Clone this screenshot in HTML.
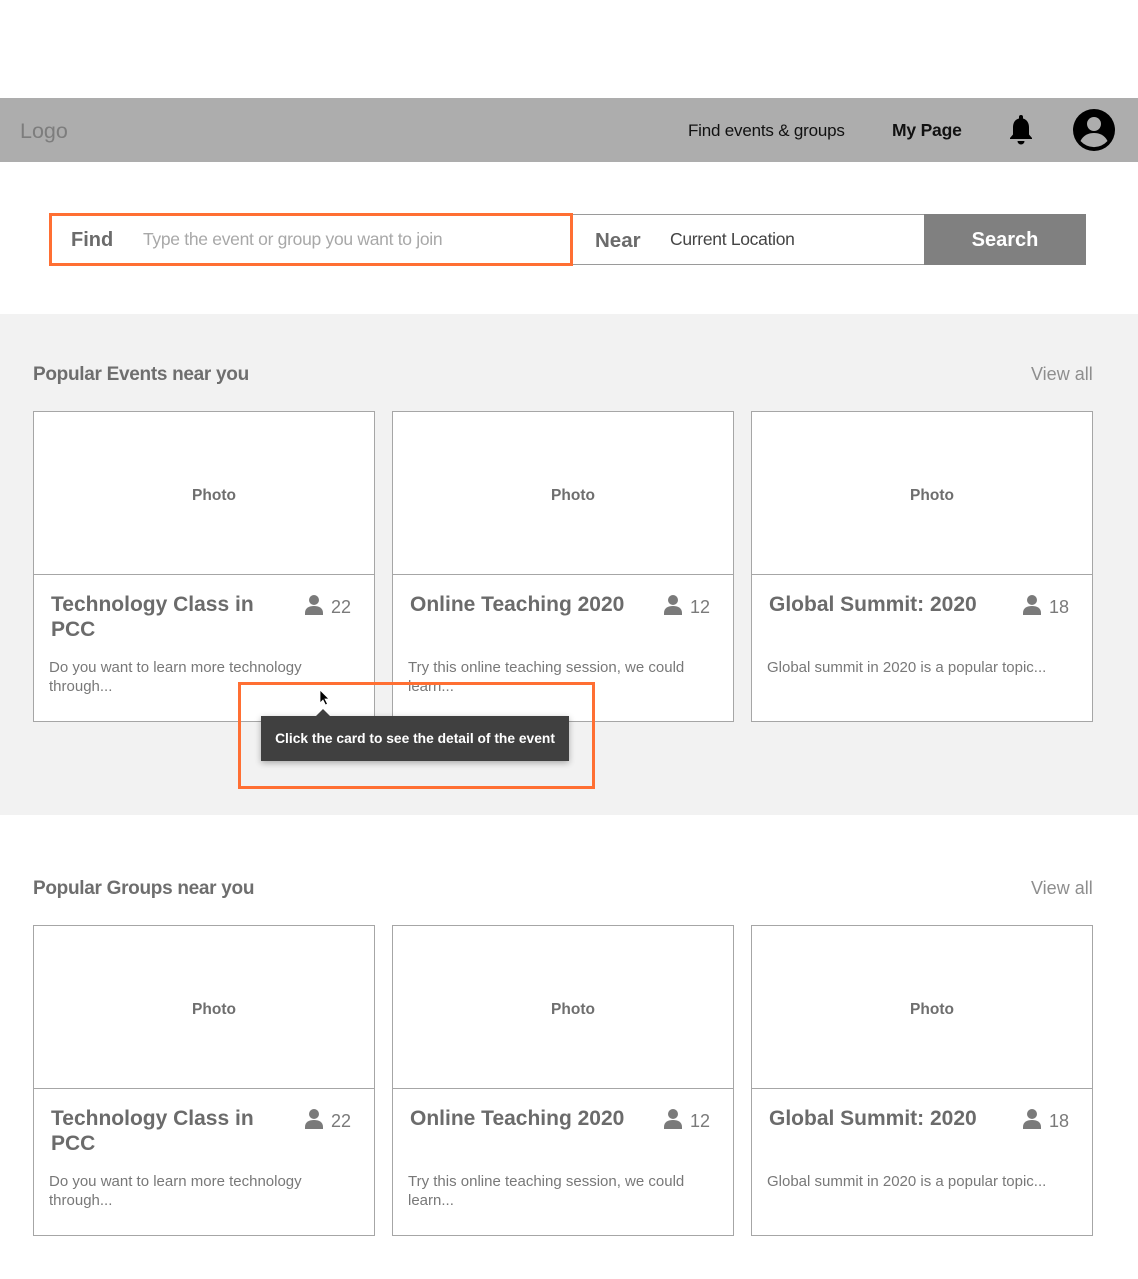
<!DOCTYPE html>
<html><head><meta charset="utf-8"><style>
*{margin:0;padding:0;box-sizing:border-box}
body{width:1138px;height:1279px;background:#fff;position:relative;overflow:hidden;font-family:"Liberation Sans",Arial,sans-serif}
.a{position:absolute}
.hdr{left:0;top:98px;width:1138px;height:64px;background:#adadad}
.card{position:absolute;width:342px;height:311px;border:1.5px solid #a6a6a6;background:#fff}
.card .ph{position:absolute;left:10px;top:2px;width:100%;height:163px;text-align:center;line-height:163px;font-size:15.5px;font-weight:bold;color:#6e6e6e}
.card .ln{position:absolute;left:0;top:0;width:100%;height:163px;border-bottom:1.5px solid #a6a6a6}
.card .t{position:absolute;left:17px;top:180px;width:225px;font-size:21px;font-weight:bold;color:#6b6b6b;line-height:25px}
.card .d{position:absolute;left:15px;top:246px;width:300px;font-size:15px;color:#787878;line-height:19px}
.card .c{position:absolute;left:271px;top:182px;font-size:18px;color:#7a7a7a;line-height:24px}
.card .c svg{vertical-align:-3px;margin-right:8px}
.sec{font-size:19px;font-weight:bold;color:#6e6e6e;letter-spacing:-0.3px}
.va{font-size:18px;color:#8e8e8e}
</style></head><body>
<div class="a hdr"></div>
<div class="a" style="left:20px;top:119px;font-size:21.5px;color:#7d7d7d">Logo</div>
<div class="a" style="left:688px;top:121px;font-size:17px;color:#111;letter-spacing:-0.2px">Find events &amp; groups</div>
<div class="a" style="left:892px;top:120px;font-size:17.5px;font-weight:bold;color:#111;letter-spacing:-0.2px">My Page</div>
<svg class="a" style="left:1006px;top:113px" width="30" height="34" viewBox="0 0 30 34"><path d="M15 2 a2 2 0 0 1 2 2 v1.5 c4 1 6 4.5 6 9 v7 l3 3.5 v1 H4 v-1 l3-3.5 v-7 c0-4.5 2-8 6-9 V4 a2 2 0 0 1 2-2z" fill="#000"/><path d="M11.5 28 h7 a3.5 3.5 0 0 1 -7 0z" fill="#000"/></svg>
<svg class="a" style="left:1072px;top:108px" width="44" height="44" viewBox="0 0 44 44"><circle cx="22" cy="22" r="21" fill="#000"/><circle cx="22" cy="16" r="7" fill="#adadad"/><path d="M8.5 33 c3-6 8-8 13.5-8 s10.5 2 13.5 8 a18 18 0 0 1 -27 0z" fill="#adadad"/></svg>

<div class="a" style="left:572px;top:214px;width:514px;height:51px;border:1px solid #9a9a9a;border-left:none;background:#fff"></div>
<div class="a" style="left:924px;top:214px;width:162px;height:51px;background:#808080;color:#fff;font-size:20px;font-weight:bold;text-align:center;line-height:53px">Search</div>
<div class="a" style="left:49px;top:213px;width:524px;height:53px;border:3px solid #ff6f33;background:#fff"></div>
<div class="a" style="left:71px;top:229px;font-size:20px;font-weight:bold;color:#6b6b6b">Find</div>
<div class="a" style="left:143px;top:229px;font-size:17.5px;color:#a8a8a8;letter-spacing:-0.3px">Type the event or group you want to join</div>
<div class="a" style="left:595px;top:229px;font-size:20.5px;font-weight:bold;color:#6b6b6b">Near</div>
<div class="a" style="left:670px;top:229px;font-size:17.5px;color:#444;letter-spacing:-0.3px">Current Location</div>

<div class="a" style="left:0;top:314px;width:1138px;height:501px;background:#f2f2f2"></div>
<div class="a sec" style="left:33px;top:364px">Popular Events near you</div>
<div class="a va" style="left:1031px;top:364px">View all</div>

<div class="card" style="left:33px;top:411px"><div class="ln"></div><div class="ph">Photo</div><div class="t">Technology Class in PCC</div><div class="c"><svg width="18" height="22" viewBox="0 0 18 22"><circle cx="9" cy="6" r="5" fill="#7a7a7a"/><path d="M0 19 c0-5 4-7 9-7 s9 2 9 7 v2 H0z" fill="#7a7a7a"/></svg>22</div><div class="d">Do you want to learn more technology through...</div></div>
<div class="card" style="left:392px;top:411px"><div class="ln"></div><div class="ph">Photo</div><div class="t">Online Teaching 2020</div><div class="c"><svg width="18" height="22" viewBox="0 0 18 22"><circle cx="9" cy="6" r="5" fill="#7a7a7a"/><path d="M0 19 c0-5 4-7 9-7 s9 2 9 7 v2 H0z" fill="#7a7a7a"/></svg>12</div><div class="d">Try this online teaching session, we could learn...</div></div>
<div class="card" style="left:751px;top:411px"><div class="ln"></div><div class="ph">Photo</div><div class="t">Global Summit: 2020</div><div class="c"><svg width="18" height="22" viewBox="0 0 18 22"><circle cx="9" cy="6" r="5" fill="#7a7a7a"/><path d="M0 19 c0-5 4-7 9-7 s9 2 9 7 v2 H0z" fill="#7a7a7a"/></svg>18</div><div class="d">Global summit in 2020 is a popular topic...</div></div>

<div class="a" style="left:238px;top:682px;width:357px;height:107px;border:3px solid #ff6f33"></div>
<div class="a" style="left:261px;top:716px;width:308px;height:45px;background:#404040;box-shadow:0 2px 6px rgba(0,0,0,.3);color:#fff;font-size:13.8px;font-weight:bold;line-height:45px;text-align:center;white-space:nowrap">Click the card to see the detail of the event</div>
<div class="a" style="left:315px;top:709px;width:0;height:0;border-left:8px solid transparent;border-right:8px solid transparent;border-bottom:8px solid #404040"></div>
<svg class="a" style="left:319px;top:689px" width="12" height="18" viewBox="0 0 12 18"><path d="M1 1 v13 l3-3 l2.5 5 l2-1 l-2.5-5 h4z" fill="#000" stroke="#fff" stroke-width="0.8"/></svg>

<div class="a sec" style="left:33px;top:878px">Popular Groups near you</div>
<div class="a va" style="left:1031px;top:878px">View all</div>

<div class="card" style="left:33px;top:925px"><div class="ln"></div><div class="ph">Photo</div><div class="t">Technology Class in PCC</div><div class="c"><svg width="18" height="22" viewBox="0 0 18 22"><circle cx="9" cy="6" r="5" fill="#7a7a7a"/><path d="M0 19 c0-5 4-7 9-7 s9 2 9 7 v2 H0z" fill="#7a7a7a"/></svg>22</div><div class="d">Do you want to learn more technology through...</div></div>
<div class="card" style="left:392px;top:925px"><div class="ln"></div><div class="ph">Photo</div><div class="t">Online Teaching 2020</div><div class="c"><svg width="18" height="22" viewBox="0 0 18 22"><circle cx="9" cy="6" r="5" fill="#7a7a7a"/><path d="M0 19 c0-5 4-7 9-7 s9 2 9 7 v2 H0z" fill="#7a7a7a"/></svg>12</div><div class="d">Try this online teaching session, we could learn...</div></div>
<div class="card" style="left:751px;top:925px"><div class="ln"></div><div class="ph">Photo</div><div class="t">Global Summit: 2020</div><div class="c"><svg width="18" height="22" viewBox="0 0 18 22"><circle cx="9" cy="6" r="5" fill="#7a7a7a"/><path d="M0 19 c0-5 4-7 9-7 s9 2 9 7 v2 H0z" fill="#7a7a7a"/></svg>18</div><div class="d">Global summit in 2020 is a popular topic...</div></div>
</body></html>
